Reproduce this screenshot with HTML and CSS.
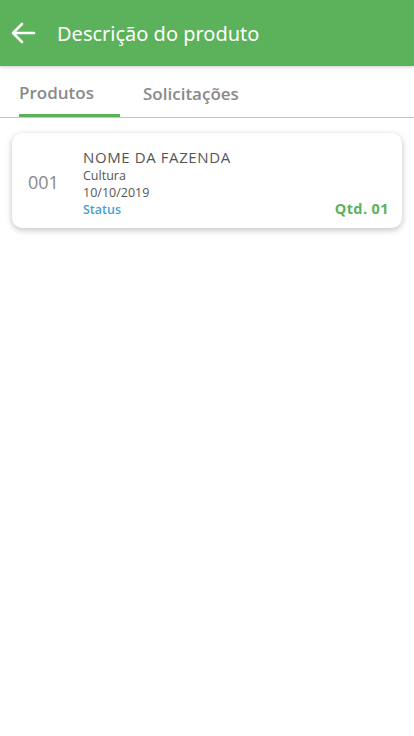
FILE: index.html
```html
<!DOCTYPE html>
<html lang="pt">
<head>
<meta charset="utf-8">
<link rel="stylesheet" href="styles.css">
</head>
<body>
<header class="appbar">
  <svg class="back" width="26" height="22" viewBox="0 0 26 22"><path d="M24 11H3M12 2L3 11l9 9" fill="none" stroke="#fff" stroke-width="2.6" stroke-linecap="round" stroke-linejoin="round"/></svg>
  <h1 class="title">Descrição do produto</h1>
</header>
<nav class="tabs">
  <div class="tab active">Produtos</div>
  <div class="tab">Solicitações</div>
</nav>
<main class="list">
  <div class="card">
    <div class="code">001</div>
    <div class="info">
      <div class="farm">NOME DA FAZENDA</div>
      <div class="meta">Cultura</div>
      <div class="meta">10/10/2019</div>
      <div class="status">Status</div>
    </div>
    <div class="qty">Qtd. 01</div>
  </div>
</main>
</body>
</html>
```
FILE: styles.css
```css
* { box-sizing: border-box; }
body { margin: 0; background: #fff; font-family: "Open Sans", sans-serif; }
.appbar { height: 66px; background: #5cb25a; display: flex; align-items: center; padding-left: 10px; box-shadow: 0 1px 3px rgba(0,0,0,0.2); position: relative; }
.back { margin-right: 21px; }
.title { margin: 0; color: #fff; font-weight: 400; font-size: 20px; font-family: "Noto Sans", sans-serif; }
.tabs { display: flex; height: 52px; border-bottom: 1px solid #c8c8c8; padding-left: 19px; }
.tab { width: 101px; display: flex; align-items: center; font-size: 17px; color: #8a8a8a; font-weight: 600; padding-top: 4px; }
.tab + .tab { width: 142px; padding-left: 23px; }
.tab.active { border-bottom: 3px solid #5cb25a; }
.list { padding: 15px 12px; }
.card { height: 95px; border-radius: 10px; box-shadow: 0 2px 6px rgba(0,0,0,0.25); display: flex; align-items: flex-start; padding: 0 13px 0 0; }
.code { width: 71px; padding-left: 16px; font-size: 18px; color: #8a8a8a; align-self: center; padding-top: 2px; }
.info { padding-top: 14px; }
.farm { font-size: 15px; color: #555; letter-spacing: 0.6px; line-height: 20px; }
.meta { font-size: 12.5px; color: #555; line-height: 17px; }
.status { font-size: 12.5px; color: #4a9fd0; font-weight: 600; line-height: 17px; }
.qty { margin-left: auto; align-self: flex-end; margin-bottom: 10px; color: #5cb25a; font-weight: 700; font-size: 14.5px; letter-spacing: 0.4px; }
```
